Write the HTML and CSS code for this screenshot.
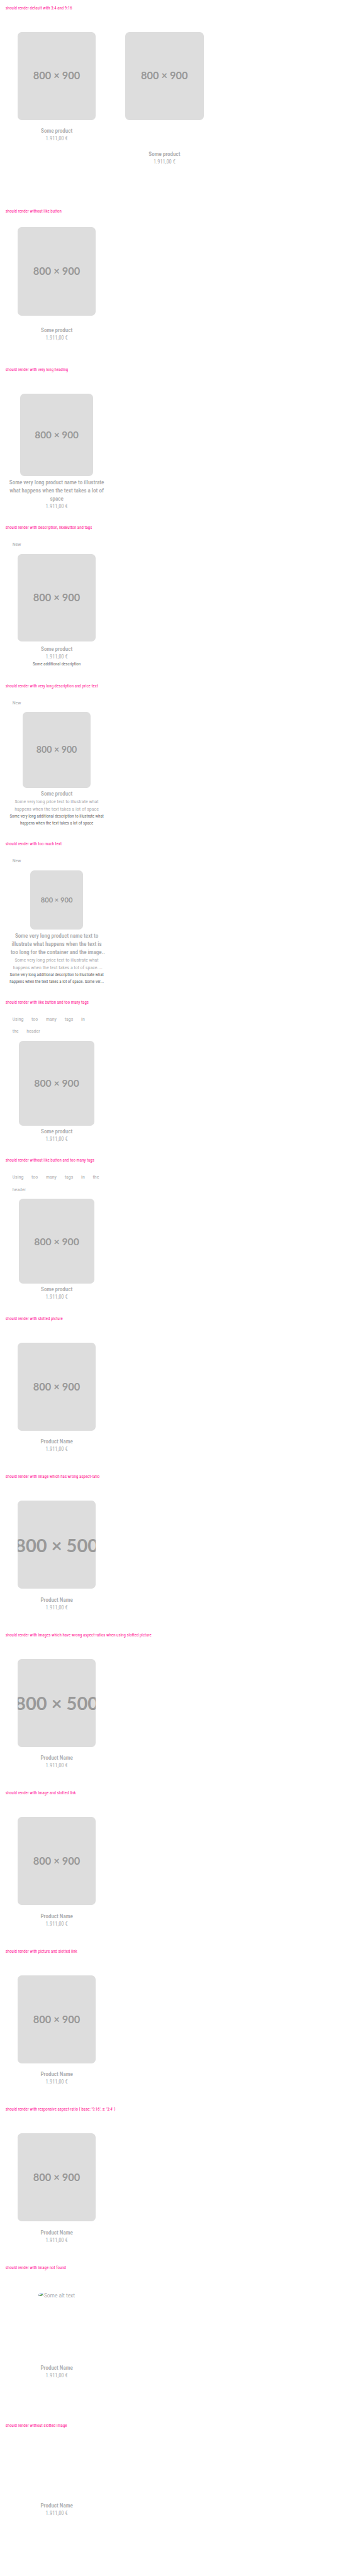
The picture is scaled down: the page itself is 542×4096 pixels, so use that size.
FILE: index.html
```html
<!DOCTYPE html>
<html lang="en">
<head>
<meta charset="utf-8">
<title>Model tile</title>
<link rel="stylesheet" href="styles.css">
</head>
<body>
<main class="page">
  <section class="case case-tall">
    <h2 class="case-title">should render default with 3:4 and 9:16</h2>
    <div class="row">
      <article class="tile start"><div class="image">800 × 900</div><p class="name">Some product</p><p class="price">1.911,00 €</p></article>
      <article class="tile start ratio-9-16"><div class="image">800 × 900</div><p class="name">Some product</p><p class="price">1.911,00 €</p></article>
    </div>
  </section>
  <section class="case">
    <h2 class="case-title">should render without like button</h2>
    <article class="tile no-header"><div class="image">800 × 900</div><p class="name">Some product</p><p class="price">1.911,00 €</p></article>
  </section>
  <section class="case">
    <h2 class="case-title">should render with very long heading</h2>
    <article class="tile long-heading"><div class="image">800 × 900</div><p class="name">Some very long product name to illustrate<br>what happens when the text takes a lot of<br>space</p><p class="price">1.911,00 €</p></article>
  </section>
  <section class="case">
    <h2 class="case-title">should render with description, likeButton and tags</h2>
    <article class="tile tagged"><ul class="tags"><li>New</li></ul><div class="image">800 × 900</div><p class="name">Some product</p><p class="price">1.911,00 €</p><p class="description">Some additional description</p></article>
  </section>
  <section class="case">
    <h2 class="case-title">should render with very long description and price text</h2>
    <article class="tile tagged long-price"><ul class="tags"><li>New</li></ul><div class="image">800 × 900</div><p class="name">Some product</p><p class="price price-text">Some very long price text to illustrate what<br>happens when the text takes a lot of space</p><p class="description">Some very long additional description to illustrate what<br>happens when the text takes a lot of space</p></article>
  </section>
  <section class="case">
    <h2 class="case-title">should render with too much text</h2>
    <article class="tile tagged too-much"><ul class="tags"><li>New</li></ul><div class="image">800 × 900</div><p class="name">Some very long product name text to<br>illustrate what happens when the text is<br><span class="clamped">too long for the container and the image..</span></p><p class="price price-text">Some very long price text to illustrate what<br><span class="clamped">happens when the text takes a lot of space....</span></p><p class="description">Some very long additional description to illustrate what<br>happens when the text takes a lot of space. Some ver...</p></article>
  </section>
  <section class="case">
    <h2 class="case-title">should render with like button and too many tags</h2>
    <article class="tile tagged many-tags"><ul class="tags tags-narrow"><li>Using</li><li>too</li><li>many</li><li>tags</li><li>in</li><li>the</li><li>header</li></ul><div class="image">800 × 900</div><p class="name">Some product</p><p class="price">1.911,00 €</p></article>
  </section>
  <section class="case">
    <h2 class="case-title">should render without like button and too many tags</h2>
    <article class="tile tagged many-tags"><ul class="tags"><li>Using</li><li>too</li><li>many</li><li>tags</li><li>in</li><li>the</li><li>header</li></ul><div class="image">800 × 900</div><p class="name">Some product</p><p class="price">1.911,00 €</p></article>
  </section>
  <section class="case">
    <h2 class="case-title">should render with slotted picture</h2>
    <article class="tile"><div class="image">800 × 900</div><p class="name">Product Name</p><p class="price">1.911,00 €</p></article>
  </section>
  <section class="case">
    <h2 class="case-title">should render with image which has wrong aspect-ratio</h2>
    <article class="tile"><div class="image image-wide">800 × 500</div><p class="name">Product Name</p><p class="price">1.911,00 €</p></article>
  </section>
  <section class="case">
    <h2 class="case-title">should render with images which have wrong aspect-ratios when using slotted picture</h2>
    <article class="tile"><div class="image image-wide">800 × 500</div><p class="name">Product Name</p><p class="price">1.911,00 €</p></article>
  </section>
  <section class="case">
    <h2 class="case-title">should render with image and slotted link</h2>
    <article class="tile"><div class="image">800 × 900</div><p class="name">Product Name</p><p class="price">1.911,00 €</p></article>
  </section>
  <section class="case">
    <h2 class="case-title">should render with picture and slotted link</h2>
    <article class="tile"><div class="image">800 × 900</div><p class="name">Product Name</p><p class="price">1.911,00 €</p></article>
  </section>
  <section class="case">
    <h2 class="case-title">should render with responsive aspect-ratio { base: '9:16', s: '3:4' }</h2>
    <article class="tile"><div class="image">800 × 900</div><p class="name">Product Name</p><p class="price">1.911,00 €</p></article>
  </section>
  <section class="case">
    <h2 class="case-title">should render with image not found</h2>
    <article class="tile not-found">
      <div class="broken"><svg class="broken-icon" viewBox="0 0 12 12"><defs><clipPath id="round"><path d="M0 12V7A7 7 0 0 1 12 5V12Z"/></clipPath></defs><g clip-path="url(#round)"><path fill="#c5d5f5" d="M0 0H12V9H0Z"/><path fill="#fff" d="M1.5 6.5Q3 4 5 5.5L6 7H1.5Z"/><path fill="#4ea53a" d="M1 9.2Q6 4.5 10 6L7 9.2Z"/><path fill="#fff" d="M6.5 10L12 4.5V10Z"/><path stroke="#8c8c8c" fill="none" d="M.5 2V8.7H6.5M9 8.7H12"/></g></svg><span>Some alt text</span></div>
      <p class="name">Product Name</p><p class="price">1.911,00 €</p>
    </article>
  </section>
  <section class="case">
    <h2 class="case-title">should render without slotted image</h2>
    <article class="tile no-image"><p class="name">Product Name</p><p class="price">1.911,00 €</p></article>
  </section>
</main>
</body>
</html>
```
FILE: styles.css
```css
* { box-sizing: border-box; }

body {
  margin: 0;
  background: #fff;
  font-family: Roboto, "Liberation Sans", sans-serif;
}

.page {
  width: 750px;
  zoom: 0.72266;
}

.case {
  height: 348px;
  overflow: hidden;
}

.case-tall { height: 448px; }

.case-title {
  margin: 10.7px 0 0 12px;
  font-size: 9.5px;
  line-height: 15px;
  font-weight: 400;
  font-stretch: 75%;
  letter-spacing: 0.02px;
  color: #ff1493;
  white-space: nowrap;
}

.row { display: flex; }

/* Tile: spacing above the image and above the text differ per variant */
.tile {
  --image-top: 44.3px;
  --image-width: 172px;
  --image-height: 194px;
  --text-top: 16px;
  display: flex;
  flex-direction: column;
  align-items: center;
  width: 237px;
  margin-left: 6.2px;
  padding-top: var(--image-top);
  text-align: center;
  white-space: nowrap;
}

.row .tile + .tile { margin-left: 0; }

.image {
  display: flex;
  align-items: center;
  justify-content: center;
  flex: none;
  width: var(--image-width);
  height: var(--image-height);
  border-radius: 9px;
  overflow: hidden;
  background: #ddd;
  color: #999;
  font: 700 calc(var(--image-width) * 0.132) / 1 Lato, sans-serif;
}

.image-wide { font-size: 40.2px; }

.name, .price, .description { margin: 0; }

.name {
  margin-top: var(--text-top);
  font-size: 12.55px;
  line-height: 18px;
  font-weight: 600;
  font-stretch: 75%;
  color: #adaeaf;
}

.price {
  font-size: 11.7px;
  line-height: 16.5px;
  font-stretch: 75%;
  color: #adaeaf;
}

.price-text { font-size: 11px; }

.description {
  font-size: 9.55px;
  line-height: 15px;
  font-stretch: 75%;
  color: #66686a;
}

.tags {
  display: flex;
  flex-wrap: wrap;
  align-self: stretch;
  gap: 10.5px 17.6px;
  margin: 0 10px 11.8px 21px;
  padding: 0;
  list-style: none;
  font-size: 11px;
  line-height: 16.5px;
  font-stretch: 75%;
  color: #adaeaf;
}

.tags-narrow { margin-right: 40px; }

.ratio-9-16 { --text-top: 66.3px; }
.no-header { --image-top: 26.3px; --text-top: 24.8px; }
.long-heading { --image-width: 160.7px; --image-height: 181.6px; --text-top: 5px; }
.tagged { --image-top: 20.7px; --image-height: 193.3px; --text-top: 7.3px; }
.long-price { --image-width: 148.8px; --image-height: 167px; --text-top: 5px; }
.too-much { --image-width: 117px; --image-height: 131px; --text-top: 5px; }
.many-tags { --image-width: 165px; --image-height: 186.8px; --text-top: 4.4px; }
.not-found { --text-top: 141.3px; }
.no-image { --image-top: 0; --text-top: 159.5px; }

.clamped { margin-left: 5px; }

.broken {
  display: flex;
  align-items: flex-start;
  height: 18px;
  font-size: 11.6px;
  line-height: 18px;
  color: #adaeaf;
}

.broken-icon { width: 12px; height: 12px; }
```
